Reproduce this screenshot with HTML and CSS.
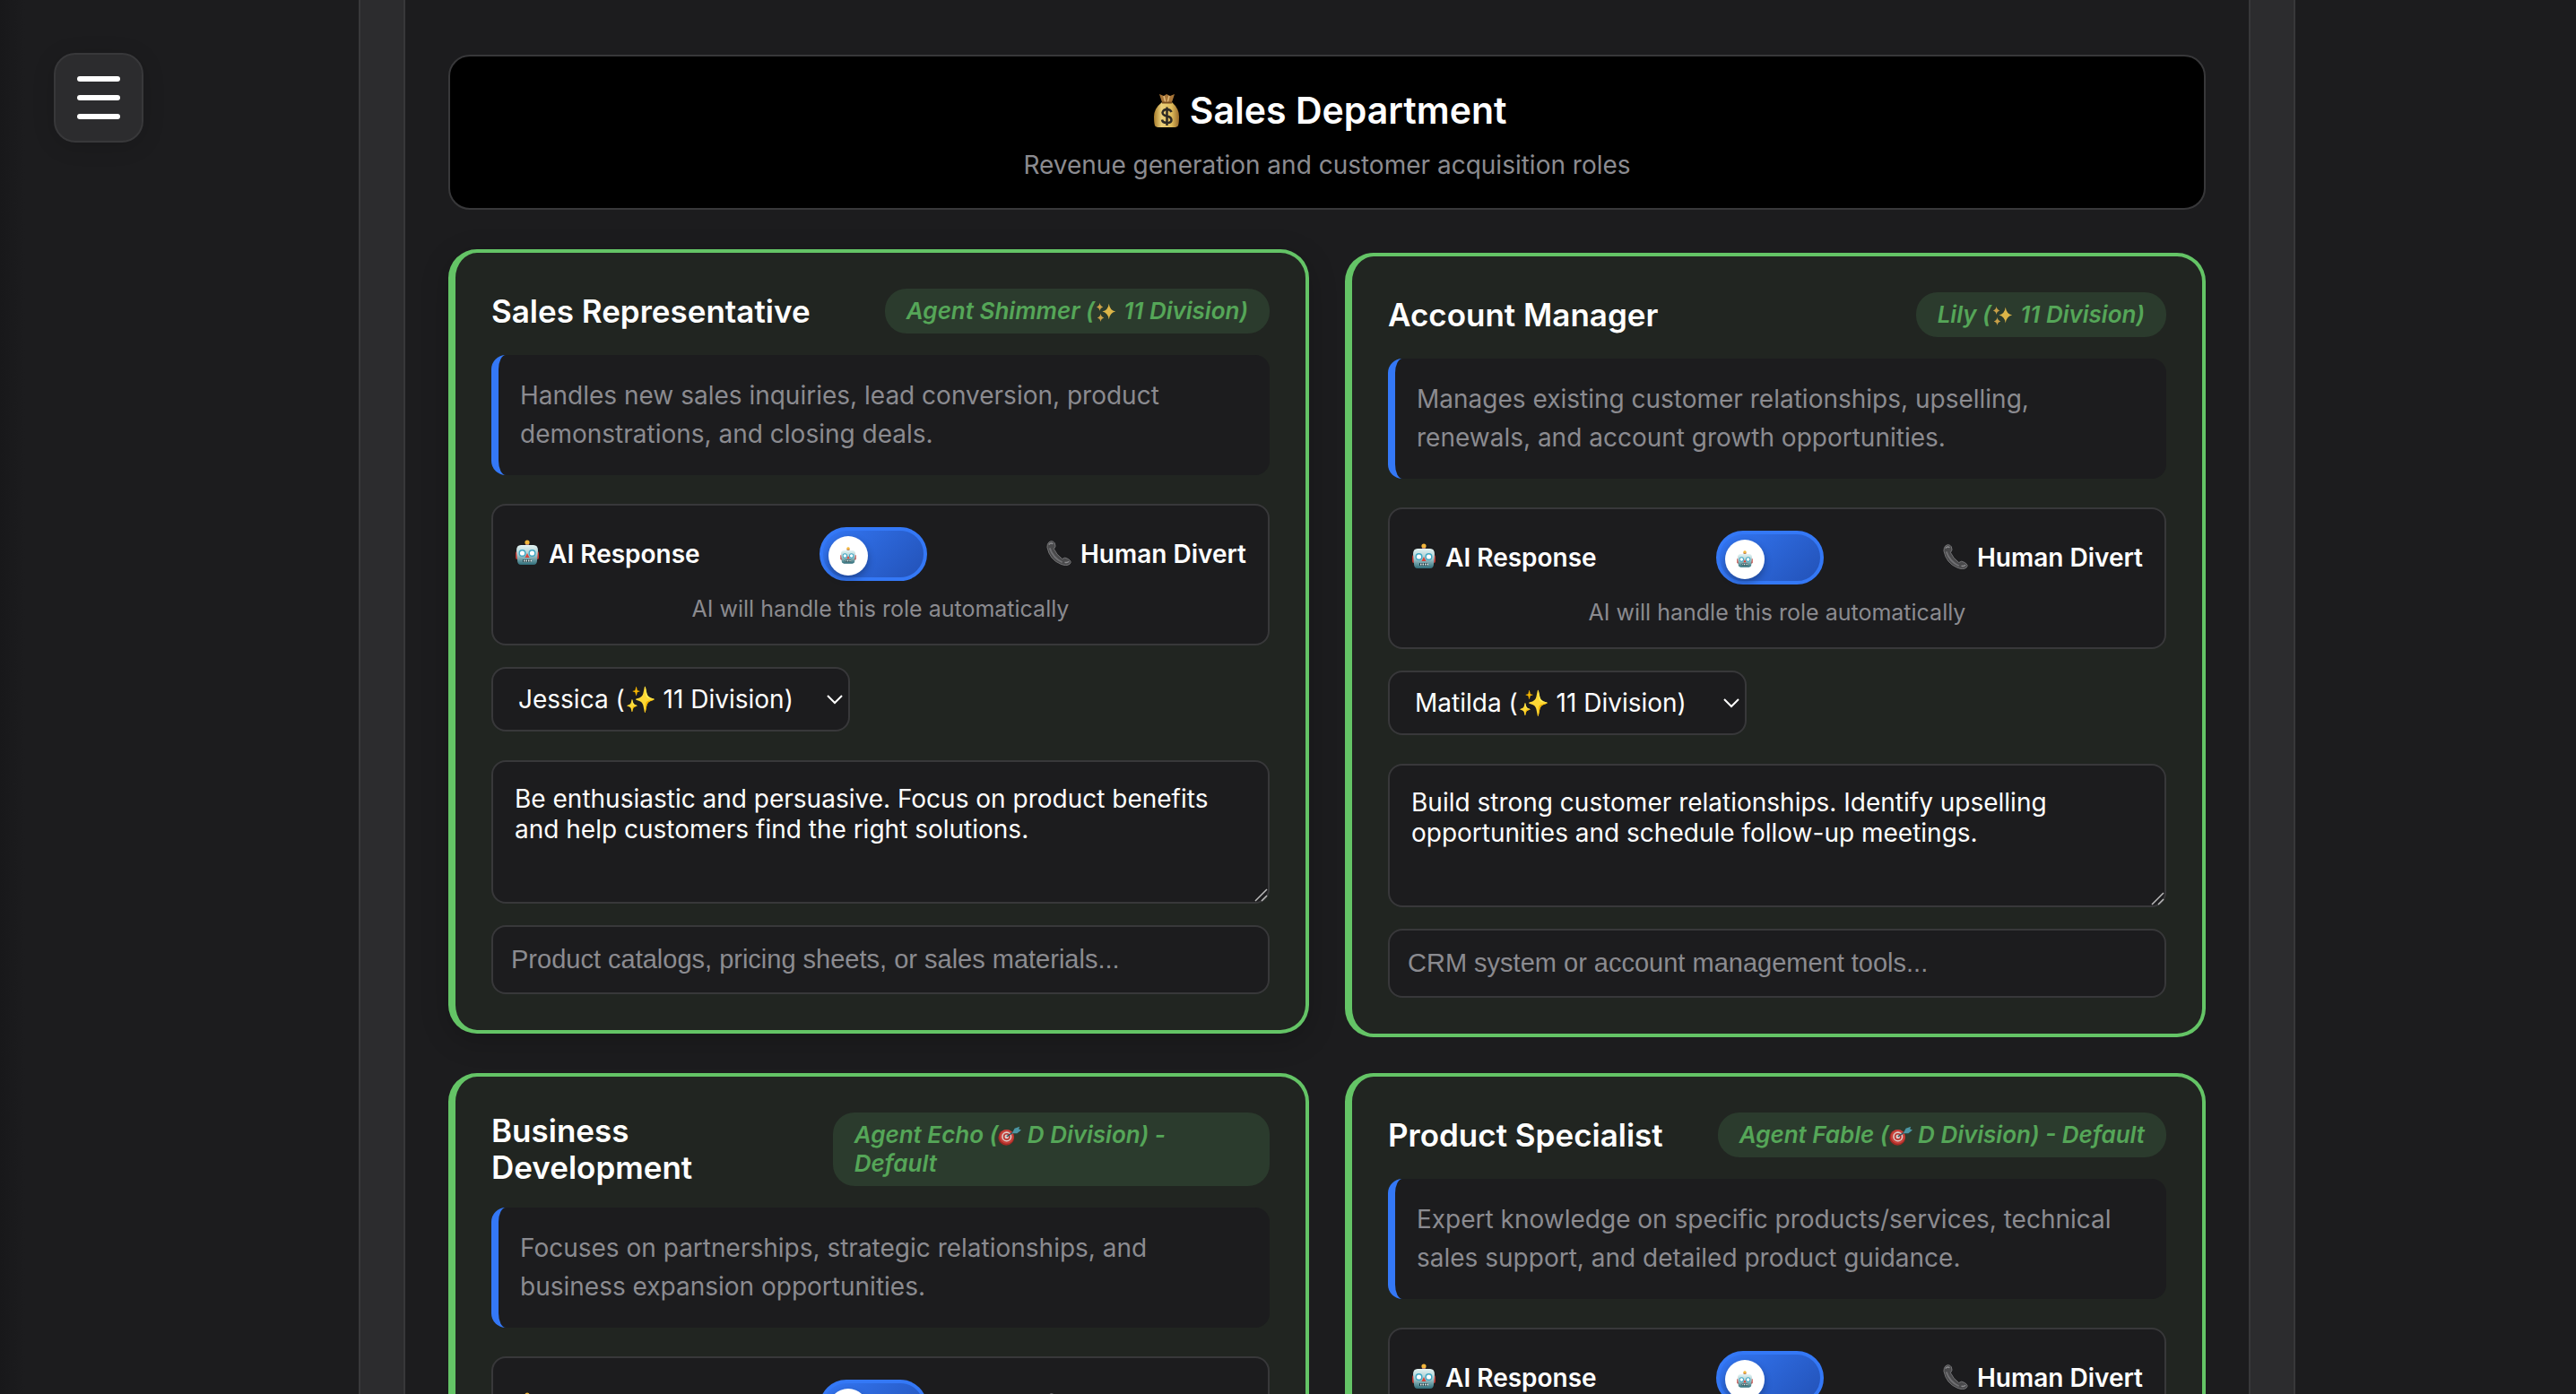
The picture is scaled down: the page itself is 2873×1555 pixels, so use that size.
FILE: index.html
```html
<!DOCTYPE html>
<html lang="en">
<head>
    <meta charset="UTF-8">
    <meta name="viewport" content="width=device-width, initial-scale=1.0">
    <title>Sales Department</title>
    <link rel="stylesheet" href="styles.css">
</head>
<body>
    <!-- icon sprite -->
    <svg class="sprite" aria-hidden="true">
        <defs>
            <linearGradient id="robotFace" x1="0" y1="0" x2="0" y2="1">
                <stop offset="0" stop-color="#e4f4f4"/>
                <stop offset=".5" stop-color="#a5c9cd"/>
                <stop offset="1" stop-color="#2f6d79"/>
            </linearGradient>
            <linearGradient id="bagBody" x1="0" y1="0" x2="1" y2="0">
                <stop offset="0" stop-color="#a67c2c"/>
                <stop offset=".3" stop-color="#ecd07a"/>
                <stop offset=".7" stop-color="#e0bd5c"/>
                <stop offset="1" stop-color="#97692a"/>
            </linearGradient>
        </defs>
        <symbol id="robot" viewBox="0 0 28 30">
            <rect x="1" y="13" width="4" height="9" rx="2" fill="#c3352f"/>
            <rect x="23" y="13" width="4" height="9" rx="2" fill="#c3352f"/>
            <rect x="12" y="3" width="4" height="5" fill="#7b4a8c"/>
            <circle cx="14" cy="3" r="2.6" fill="#f2b63c"/>
            <path d="M7 6h14q5 0 5 6l-1 11q0 5-4 5H7q-4 0-4-5L2 12q0-6 5-6z" fill="url(#robotFace)"/>
            <circle cx="8.500" cy="15" r="4" fill="#3fa7c4"/>
            <circle cx="19.500" cy="15" r="4" fill="#3fa7c4"/>
            <circle cx="8.500" cy="15" r="2.600" fill="#fff"/>
            <circle cx="19.500" cy="15" r="2.600" fill="#fff"/>
            <path d="M14 15l2.500 5h-5z" fill="#d9453b"/>
            <path d="M9 23.500h10" stroke="#1f3f46" stroke-width="3"/>
            <path d="M10 23.500h9" stroke="#e8f0f0" stroke-width="2" stroke-dasharray="1.500 1"/>
        </symbol>
        <symbol id="phone" viewBox="0 0 30 30">
            <path d="M3 2Q7-1 10 3q2 4-1 7 3 7 10 12 3-3 7 0 5 3 2 6-4 3-11 0Q4 23 1 8q0-4 2-6z" fill="#4a4a4c" stroke="#77777a" stroke-width="1"/>
            <path d="M4 9q4 12 15 17" fill="none" stroke="#707073" stroke-width="2"/>
            <path d="M3 5q2-3 5-1M22 26q3 1 5-1" fill="none" stroke="#8b8b8e" stroke-width="1.500"/>
        </symbol>
        <symbol id="moneybag" viewBox="0 0 30 38">
            <path d="M7 1l5 2 3-2 4 2 5-2-3 9H10z" fill="#a87537"/>
            <path d="M12 3l2 8M18 3l-2 8" stroke="#e0b878" stroke-width="1.500"/>
            <path d="M10 10h11q8 7 8 16 0 7-1 10-1 2-5 2H7q-4 0-5-2-1-3-1-10 0-9 9-16z" fill="url(#bagBody)"/>
            <path d="M10 10.500h11" stroke="#7a4e1e" stroke-width="2"/>
            <path d="M20.500 21q-1-3-5-3t-5 3.500q0 3 5 4t5 4.500q0 3-5 3t-5.500-3.500M15.500 15.500V36" fill="none" stroke="#2e2a24" stroke-width="2.500"/>
        </symbol>
        <symbol id="sparkles" viewBox="0 0 26 26">
            <path d="M16 3q1 8 8 9.500-7 1.500-8 9.500-1-8-8-9.500 7-1.500 8-9.500z" fill="#dcb548"/>
            <path d="M5 2q.500 4 4 5-3.500 1-4 5-.500-4-4-5 3.500-1 4-5z" fill="#c9a048"/>
            <path d="M6 15q.500 4 4 5-3.500 1-4 5-.500-4-4-5 3.500-1 4-5z" fill="#c9a048"/>
        </symbol>
        <symbol id="target" viewBox="0 0 28 24">
            <circle cx="10" cy="14" r="9.500" fill="#a52a24"/>
            <circle cx="10.500" cy="13" r="8.500" fill="#c8423b"/>
            <circle cx="10.500" cy="13" r="6" fill="#dfcfcb"/>
            <circle cx="10.500" cy="13" r="4.300" fill="#b93630"/>
            <circle cx="10.500" cy="13" r="2.500" fill="#e0cfcb"/>
            <path d="M10.500 13L21 6" stroke="#2f5560" stroke-width="1.500"/>
            <path d="M17 9l3-6 6-2-1 3 3 1-5 4z" fill="#4b96a4"/>
        </symbol>
    </svg>

    <button type="button" class="menu-btn" aria-label="Menu">
        <span></span>
        <span></span>
        <span></span>
    </button>

    <main class="page">
        <div class="panel">
            <div class="section">
                <header class="dept-header">
                    <h2><svg class="bag"><use href="#moneybag"/></svg> Sales Department</h2>
                    <p>Revenue generation and customer acquisition roles</p>
                </header>

                <div class="role-grid">
                    <!-- Sales Representative -->
                    <div class="role-card hovered">
                        <div class="role-head">
                            <h3>Sales Representative</h3>
                            <span class="badge">Agent Shimmer (<svg><use href="#sparkles"/></svg> 11 Division)</span>
                        </div>
                        <p class="role-desc">Handles new sales inquiries, lead conversion, product demonstrations, and closing deals.</p>
                        <div class="divert">
                            <div class="divert-row">
                                <span class="divert-label"><svg><use href="#robot"/></svg> AI Response</span>
                                <label class="toggle">
                                    <input type="checkbox" aria-label="Divert Sales Representative to a human">
                                    <span class="knob"><svg><use href="#robot"/></svg></span>
                                </label>
                                <span class="divert-label"><svg><use href="#phone"/></svg> Human Divert</span>
                            </div>
                            <p class="divert-note">AI will handle this role automatically</p>
                        </div>
                        <select class="voice" aria-label="Sales Representative voice">
                            <option>Jessica (✨ 11 Division)</option>
                        </select>
                        <textarea class="prompt" aria-label="Sales Representative instructions">Be enthusiastic and persuasive. Focus on product benefits and help customers find the right solutions.</textarea>
                        <input type="text" class="source" aria-label="Sales Representative resources" placeholder="Product catalogs, pricing sheets, or sales materials...">
                    </div>

                    <!-- Account Manager -->
                    <div class="role-card">
                        <div class="role-head">
                            <h3>Account Manager</h3>
                            <span class="badge">Lily (<svg><use href="#sparkles"/></svg> 11 Division)</span>
                        </div>
                        <p class="role-desc">Manages existing customer relationships, upselling, renewals, and account growth opportunities.</p>
                        <div class="divert">
                            <div class="divert-row">
                                <span class="divert-label"><svg><use href="#robot"/></svg> AI Response</span>
                                <label class="toggle">
                                    <input type="checkbox" aria-label="Divert Account Manager to a human">
                                    <span class="knob"><svg><use href="#robot"/></svg></span>
                                </label>
                                <span class="divert-label"><svg><use href="#phone"/></svg> Human Divert</span>
                            </div>
                            <p class="divert-note">AI will handle this role automatically</p>
                        </div>
                        <select class="voice" aria-label="Account Manager voice">
                            <option>Matilda (✨ 11 Division)</option>
                        </select>
                        <textarea class="prompt" aria-label="Account Manager instructions">Build strong customer relationships. Identify upselling opportunities and schedule follow-up meetings.</textarea>
                        <input type="text" class="source" aria-label="Account Manager resources" placeholder="CRM system or account management tools...">
                    </div>

                    <!-- Business Development -->
                    <div class="role-card">
                        <div class="role-head">
                            <h3>Business Development</h3>
                            <span class="badge">Agent Echo (<svg><use href="#target"/></svg> D Division) - Default</span>
                        </div>
                        <p class="role-desc">Focuses on partnerships, strategic relationships, and business expansion opportunities.</p>
                        <div class="divert">
                            <div class="divert-row">
                                <span class="divert-label"><svg><use href="#robot"/></svg> AI Response</span>
                                <label class="toggle">
                                    <input type="checkbox" aria-label="Divert Business Development to a human">
                                    <span class="knob"><svg><use href="#robot"/></svg></span>
                                </label>
                                <span class="divert-label"><svg><use href="#phone"/></svg> Human Divert</span>
                            </div>
                            <p class="divert-note">AI will handle this role automatically</p>
                        </div>
                    </div>

                    <!-- Product Specialist -->
                    <div class="role-card">
                        <div class="role-head">
                            <h3>Product Specialist</h3>
                            <span class="badge">Agent Fable (<svg><use href="#target"/></svg> D Division) - Default</span>
                        </div>
                        <p class="role-desc">Expert knowledge on specific products/services, technical sales support, and detailed product guidance.</p>
                        <div class="divert">
                            <div class="divert-row">
                                <span class="divert-label"><svg><use href="#robot"/></svg> AI Response</span>
                                <label class="toggle">
                                    <input type="checkbox" aria-label="Divert Product Specialist to a human">
                                    <span class="knob"><svg><use href="#robot"/></svg></span>
                                </label>
                                <span class="divert-label"><svg><use href="#phone"/></svg> Human Divert</span>
                            </div>
                            <p class="divert-note">AI will handle this role automatically</p>
                        </div>
                    </div>
                </div>
            </div>
        </div>
    </main>
</body>
</html>
```
FILE: styles.css
```css
* {
    margin: 0;
    padding: 0;
    box-sizing: border-box;
}

body {
    height: 100vh;
    overflow: hidden;
    /* shadow of the closed sidebar on the left edge */
    background: linear-gradient(90deg, #18181a, #1c1c1e 28px);
    color: #fff;
    font-family: Inter, "Liberation Sans", sans-serif;
    font-size: 28px;
}

.sprite {
    position: absolute;
    width: 0;
    height: 0;
}

/* menu button */
.menu-btn {
    position: fixed;
    top: 59px;
    left: 60px;
    width: 100px;
    height: 100px;
    display: flex;
    flex-direction: column;
    align-items: center;
    justify-content: center;
    gap: 15px;
    background: #2c2c2e;
    border: 2px solid #38383a;
    border-radius: 24px;
    box-shadow: 0 4px 24px rgba(0, 0, 0, 0.15);
    cursor: pointer;
}

.menu-btn span {
    width: 48px;
    height: 6px;
    background: #fff;
    border-radius: 3px;
}

/* layout */
.page {
    min-height: 100vh;
    padding: 0 313px 0 400px;
}

.panel {
    min-height: 100vh;
    padding: 0 48px;
    background: #2c2c2e;
    border: solid #38383a;
    border-width: 0 2px;
}

.section {
    min-height: 100vh;
    padding: 61px 48px;
    background: #1c1c1e;
    border: solid #38383a;
    border-width: 0 2px;
}

.dept-header {
    margin-bottom: 48px;
    padding: 35px 32px 28px;
    background: #000;
    border: 2px solid #38383a;
    border-radius: 24px;
    text-align: center;
}

.dept-header h2 {
    margin-bottom: 16px;
    font-size: 41px;
    font-weight: 600;
    line-height: 50px;
}

.dept-header p {
    color: #8b8b90;
    line-height: 40px;
}

.bag {
    width: 30px;
    height: 38px;
    margin: 0 1px 0 6px;
    vertical-align: -4px;
}

.role-grid {
    display: grid;
    grid-template-columns: 1fr 1fr;
    gap: 40px;
}

/* role cards */
.role-card {
    padding: 40px;
    min-width: 0;
    background: #212521;
    border: 4px solid #64c466;
    border-left-width: 8px;
    border-radius: 32px;
}

.role-card.hovered {
    transform: translateY(-4px);
    box-shadow: 0 8px 32px rgba(0, 0, 0, 0.2);
}

.role-head {
    display: flex;
    justify-content: space-between;
    align-items: center;
    margin-bottom: 24px;
}

.role-head h3 {
    font-size: 35px;
    font-weight: 600;
    line-height: 41px;
}

.badge {
    padding: 9px 24px;
    background: #2b3b2d;
    border-radius: 24px;
    color: #55a658;
    font-size: 26px;
    font-style: italic;
    font-weight: 600;
    line-height: 32px;
}

.badge svg {
    width: 26px;
    height: 24px;
    vertical-align: -4px;
}

.role-desc {
    margin-bottom: 32px;
    padding: 24px;
    background: #1c1c1e;
    border-left: 8px solid #3478f6;
    border-radius: 16px;
    color: #8b8b90;
    line-height: 43px;
}

/* AI / human switch */
.divert {
    margin-bottom: 24px;
    padding: 24px;
    background: #1c1c1e;
    border: 2px solid #38383a;
    border-radius: 16px;
}

.divert-row {
    display: flex;
    justify-content: space-between;
    align-items: center;
    margin-bottom: 16px;
}

.divert-label {
    font-weight: 600;
}

.divert-label svg {
    width: 28px;
    height: 30px;
    margin-right: 3px;
    vertical-align: -4px;
}

.toggle {
    width: 120px;
    height: 60px;
    padding: 6px;
    background: linear-gradient(135deg, #3478f6, #2250b4);
    background-origin: border-box;
    border: 4px solid #3478f6;
    border-radius: 30px;
    cursor: pointer;
}

.toggle input {
    position: absolute;
    opacity: 0;
}

.knob {
    display: flex;
    align-items: center;
    justify-content: center;
    width: 44px;
    height: 44px;
    background: #fff;
    border-radius: 50%;
    box-shadow: 0 4px 8px rgba(0, 0, 0, 0.3);
}

.knob svg {
    width: 20px;
    height: 20px;
}

.toggle input:checked + .knob {
    margin-left: auto;
}

.divert-note {
    color: #8b8b90;
    font-size: 25px;
    line-height: 30px;
    text-align: center;
}

/* form controls */
.voice,
.prompt,
.source {
    display: block;
    background: #1c1c1e;
    border: 2px solid #38383a;
    border-radius: 16px;
    color: #fff;
    font-family: inherit;
    font-size: 28px;
}

.voice {
    width: 400px;
    height: 72px;
    margin-bottom: 32px;
    padding: 0 28px;
    appearance: none;
    background: #1c1c1e url("data:image/svg+xml,%3Csvg xmlns='http://www.w3.org/2000/svg' width='18' height='12'%3E%3Cpath d='M1 2l8 8 8-8' fill='none' stroke='%23fff' stroke-width='2'/%3E%3C/svg%3E") no-repeat right 6px center;
}

.prompt {
    width: 100%;
    height: 160px;
    margin-bottom: 24px;
    padding: 24px;
    line-height: 34px;
    resize: vertical;
}

.prompt::-webkit-resizer {
    background: url("data:image/svg+xml,%3Csvg xmlns='http://www.w3.org/2000/svg' width='15' height='15'%3E%3Cpath d='M1 14L14 1M8 14l6-6' stroke='%23bbb' stroke-width='1.5'/%3E%3C/svg%3E") no-repeat right bottom;
}

.source {
    width: 100%;
    height: 77px;
    padding: 0 20px;
    font-family: "Liberation Sans", Arial, sans-serif;
    font-size: 29px;
}

.source::placeholder {
    color: #8b8b90;
}
```
